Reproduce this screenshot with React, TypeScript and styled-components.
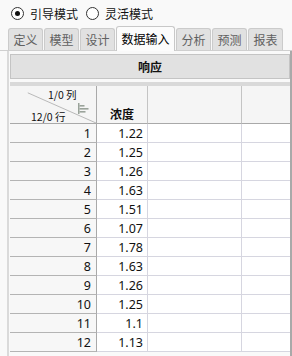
import React from 'react';
import styled, {createGlobalStyle} from "styled-components";

const GlobalStyle = createGlobalStyle`
    html, body {
        margin: 0;
        padding: 0;
        background: #f9f9f9;
    }
    body {
        font-family: "Noto Sans", "Noto Sans CJK SC", sans-serif;
        color: #111;
    }
`

const tabs = ["定义", "模型", "设计", "数据输入", "分析", "预测", "报表"]
const activeTab = "数据输入"

const rows = ["1.22", "1.25", "1.26", "1.63", "1.51", "1.07", "1.78", "1.63", "1.26", "1.25", "1.1", "1.13"]

const cjk = `"Noto Sans CJK SC", "Noto Sans", sans-serif`

export default function App() {
    return (
        <Page>
            <GlobalStyle/>
            <ModeRow>
                <RadioOption>
                    <Radio $checked/>
                    引导模式
                </RadioOption>
                <RadioOption>
                    <Radio/>
                    灵活模式
                </RadioOption>
            </ModeRow>

            <TabBar>
                {tabs.map(t => (
                    <Tab key={t} $active={t === activeTab}>{t}</Tab>
                ))}
            </TabBar>

            <Panel>
                <ResponseBar>响应</ResponseBar>
                <Strip/>
                <Grid>
                    <CornerCell>
                        <Diagonal viewBox="0 0 87 38" preserveAspectRatio="none">
                            <line x1="18" y1="7" x2="87" y2="38" stroke="#b8b8b8" strokeWidth="1"/>
                        </Diagonal>
                        <ColCount>1/0 列</ColCount>
                        <RowCount>12/0 行</RowCount>
                        <SortIcon width="11" height="11" viewBox="0 0 11 11">
                            <rect x="0" y="0" width="1.5" height="11" fill="#9aa39a"/>
                            <rect x="1.5" y="2" width="5" height="1.6" fill="#9aa39a"/>
                            <rect x="1.5" y="5" width="9" height="1.6" fill="#9aa39a"/>
                            <rect x="1.5" y="8" width="6" height="1.6" fill="#9aa39a"/>
                        </SortIcon>
                    </CornerCell>
                    <HeadCell>浓度</HeadCell>
                    <HeadCell/>
                    <HeadCell $last/>

                    {rows.map((v, i) => (
                        <React.Fragment key={i}>
                            <RowNum>{i + 1}</RowNum>
                            <Cell>{v}</Cell>
                            <Cell/>
                            <Cell $last/>
                        </React.Fragment>
                    ))}
                </Grid>
            </Panel>
        </Page>
    );
}

const Page = styled.div`
    width: 292px;
    height: 356px;
    overflow: hidden;
    display: flex;
    flex-direction: column;
`

const ModeRow = styled.div`
    height: 26px;
    display: flex;
    align-items: center;
    padding-left: 11px;
    column-gap: 8px;
    font-family: ${cjk};
    font-size: 12px;
`

const RadioOption = styled.label`
    display: flex;
    align-items: center;
    column-gap: 6px;
`

const Radio = styled.span<{ $checked?: boolean }>`
    width: 11px;
    height: 11px;
    border: 1px solid #333;
    border-radius: 50%;
    background: #fff;
    display: flex;
    align-items: center;
    justify-content: center;

    &::after {
        content: "";
        width: 5px;
        height: 5px;
        border-radius: 50%;
        background: ${props => props.$checked ? "#111" : "transparent"};
    }
`

const TabBar = styled.div`
    height: 24px;
    display: flex;
    align-items: flex-end;
    padding-left: 8px;
    column-gap: 1px;
    border-bottom: 1px solid #cfcfcf;
    position: relative;
    z-index: 1;
`

const Tab = styled.div<{ $active?: boolean }>`
    height: ${props => props.$active ? "25px" : "22px"};
    box-sizing: border-box;
    padding: 0 4.5px;
    display: flex;
    align-items: center;
    font-family: ${cjk};
    font-size: 12px;
    color: ${props => props.$active ? "#000" : "#606060"};
    background: ${props => props.$active ? "#fcfcfc" : "#e1e1e1"};
    border: 1px solid ${props => props.$active ? "#c8c8c8" : "#cbcbcb"};
    border-bottom: none;
    border-radius: 3px 3px 0 0;
    margin-bottom: ${props => props.$active ? "-1px" : "0"};
    padding-bottom: ${props => props.$active ? "1px" : "0"};
`

const Panel = styled.div`
    flex: 1;
    margin-left: 7px;
    padding-top: 3px;
    border-left: 2px solid #dadada;
    border-right: 2px solid #a9a9a9;
    background: #f9f9f9;
    display: flex;
    flex-direction: column;
`

const ResponseBar = styled.div`
    height: 25px;
    margin-left: 1px;
    box-sizing: border-box;
    display: flex;
    align-items: center;
    justify-content: center;
    background: #e1e1e1;
    border: 1px solid #c4c4c4;
    font-family: ${cjk};
    font-size: 12px;
    font-weight: 700;
    color: #111;
`

const Strip = styled.div`
    height: 4px;
    margin-top: 3px;
    margin-left: 1px;
    background: #d9d9d9;
`

const Grid = styled.div`
    display: grid;
    grid-template-columns: 87px 51px 94px 1fr;
    grid-template-rows: 38px;
    grid-auto-rows: 19px;
    margin-left: 1px;
`

const HeadCell = styled.div<{ $last?: boolean }>`
    box-sizing: border-box;
    background: #f5f5f5;
    border-bottom: 1px solid #a9a9a9;
    border-right: ${props => props.$last ? "none" : "1px solid #c4c4c4"};
    display: flex;
    align-items: flex-end;
    justify-content: center;
    padding-bottom: 1px;
    font-family: ${cjk};
    font-size: 12px;
    font-weight: 700;
    color: #111;
`

const CornerCell = styled.div`
    position: relative;
    box-sizing: border-box;
    background: #f5f5f5;
    border-bottom: 1px solid #a9a9a9;
    border-right: 1px solid #a9a9a9;
    font-family: ${cjk};
    font-size: 10.5px;
    color: #111;
`

const Diagonal = styled.svg`
    position: absolute;
    inset: 0;
    width: 100%;
    height: 100%;
`

const ColCount = styled.span`
    position: absolute;
    left: 38px;
    top: 1px;
`

const RowCount = styled.span`
    position: absolute;
    left: 21px;
    top: 23px;
`

const SortIcon = styled.svg`
    position: absolute;
    left: 68px;
    top: 17px;
`

const RowNum = styled.div`
    box-sizing: border-box;
    background: #f7f7f7;
    border-bottom: 1px solid #b4b4b4;
    border-right: 1px solid #a9a9a9;
    display: flex;
    align-items: center;
    justify-content: flex-end;
    padding-right: 5px;
    font-size: 12.5px;
`

const Cell = styled.div<{ $last?: boolean }>`
    box-sizing: border-box;
    background: #fff;
    border-bottom: 1px solid #d6d6e0;
    border-right: ${props => props.$last ? "none" : "1px solid #d6d6e0"};
    display: flex;
    align-items: center;
    justify-content: flex-end;
    padding-right: 4px;
    font-size: 12.5px;
`
